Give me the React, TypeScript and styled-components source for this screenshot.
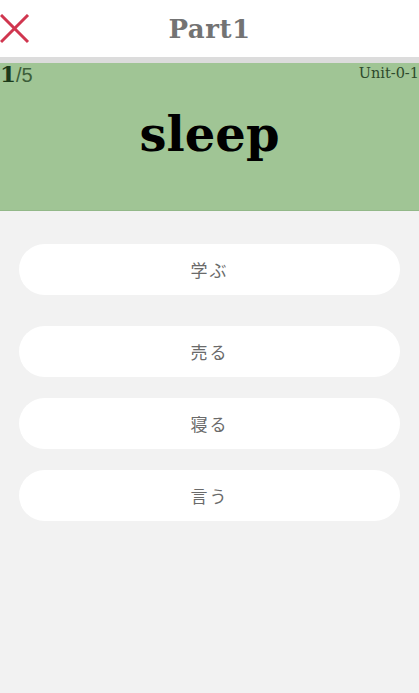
import React from "react";
import styled, { createGlobalStyle } from "styled-components";

const Global = createGlobalStyle`
  html, body { margin: 0; padding: 0; background: #f2f2f2; }
  body { font-family: "Noto Sans CJK JP", "Noto Sans", sans-serif; }
`;

const Page = styled.div`
  width: 419px;
  min-height: 693px;
  background: #f2f2f2;
  display: flex;
  flex-direction: column;
`;

const Header = styled.header`
  height: 57px;
  background: #ffffff;
  display: grid;
  grid-template-columns: 60px 1fr 60px;
  align-items: center;
  border-bottom: 6px solid #dcdcdc;
`;

const CloseButton = styled.button`
  border: 0;
  background: transparent;
  padding: 0;
  width: 30px;
  height: 57px;
  display: flex;
  align-items: center;
  justify-content: flex-start;
  cursor: pointer;
`;

const Title = styled.h1`
  margin: 0;
  text-align: center;
  font-family: "DejaVu Serif", serif;
  font-weight: bold;
  font-size: 26px;
  color: #737373;
  letter-spacing: 0.5px;
`;

const Card = styled.section`
  height: 147px;
  background: #a0c595;
  border-bottom: 1px solid #93b889;
  display: flex;
  flex-direction: column;
`;

const CardTop = styled.div`
  display: flex;
  justify-content: space-between;
  align-items: flex-start;
  height: 28px;
`;

const Counter = styled.div`
  font-family: "Liberation Sans", sans-serif;
  color: #3d5e3a;
  font-size: 20px;
  line-height: 22px;
`;

const Current = styled.span`
  font-family: "DejaVu Serif", serif;
  font-weight: bold;
  font-size: 23px;
  color: #1c3a1a;
`;

const UnitLabel = styled.div`
  font-family: "DejaVu Serif", serif;
  font-size: 14.5px;
  color: #2e4a2c;
  padding-top: 2px;
`;

const Word = styled.div`
  flex: 1;
  display: flex;
  justify-content: center;
  align-items: flex-start;
  padding-top: 15px;
  font-family: "DejaVu Serif", serif;
  font-weight: bold;
  font-size: 48px;
  color: #000;
`;

const Choices = styled.div`
  display: flex;
  flex-direction: column;
  gap: 21px;
  padding: 33px 19px 0;
`;

const Choice = styled.button<{ $extraGap?: boolean }>`
  height: 51px;
  border: 0;
  border-radius: 26px;
  background: #ffffff;
  font-family: "Noto Sans CJK JP", sans-serif;
  font-size: 17px;
  color: #6a6a6a;
  letter-spacing: 2px;
  margin-bottom: ${(p) => (p.$extraGap ? "10px" : "0")};
  cursor: pointer;
`;

const choices = ["学ぶ", "売る", "寝る", "言う"];

export default function App() {
  return (
    <Page>
      <Global />
      <Header>
        <CloseButton aria-label="close">
          <svg width="30" height="30" viewBox="0 0 30 30">
            <path d="M1 1 L28 28 M28 1 L1 28" stroke="#d0364f" strokeWidth="3" fill="none" />
          </svg>
        </CloseButton>
        <Title>Part1</Title>
        <div />
      </Header>
      <Card>
        <CardTop>
          <Counter>
            <Current>1</Current>/5
          </Counter>
          <UnitLabel>Unit-0-1</UnitLabel>
        </CardTop>
        <Word>sleep</Word>
      </Card>
      <Choices>
        {choices.map((c, i) => (
          <Choice key={c} $extraGap={i === 0}>
            {c}
          </Choice>
        ))}
      </Choices>
    </Page>
  );
}
